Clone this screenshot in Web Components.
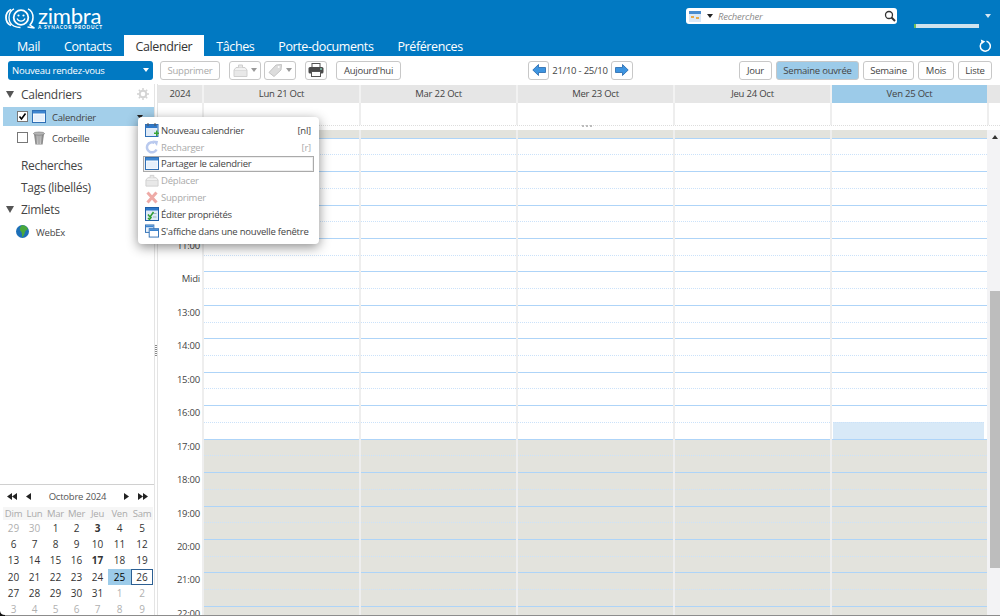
<!DOCTYPE html>
<html lang="fr">
<head>
<meta charset="utf-8">
<title>Zimbra - Calendrier</title>
<style>
    html, body {
        margin: 0;
        height: 616px;
        overflow: hidden;
        background: #fff;
        font-family: "Open Sans", "Noto Sans", sans-serif;
        font-size: 9.5px;
        letter-spacing: -.22px;
        color: #333;
    }
</style>
</head>
<body>
<zm-app></zm-app>

<script>
// petites icones partagees par tous les composants
const ICONS = {
    calendar: `<svg width="14" height="13" viewBox="0 0 14 13"><rect x=".5" y=".5" width="13" height="12" fill="#fff" stroke="#2f6fb5"/><rect x="1" y="1" width="12" height="2.5" fill="#3d85d0"/><rect x="1.5" y="4.5" width="11" height="7" fill="#e6f0fb"/></svg>`,
    trash: `<svg width="14" height="14" viewBox="0 0 14 14"><path d="M2 3h10l-1.4 10.5H3.4z" fill="#8d8d8d"/><path d="M5 4l.4 9M7 4v9M9 4l-.4 9" stroke="#cfcfcf"/><ellipse cx="7" cy="2.6" rx="5.6" ry="1.6" fill="#b5b5b5" stroke="#777" stroke-width=".6"/></svg>`,
    globe: `<svg width="13" height="13" viewBox="0 0 13 13"><circle cx="6.5" cy="6.5" r="6.5" fill="#1c6fb8"/><path d="M6 0c3 .4 5 1.500 6 4-1 1.500-2.500 1-3 3s-1 3.500-2.500 5.500C5.500 10 6.500 8 5 6.500S3 3 6 0z" fill="#49a83c"/></svg>`,
    gear: `<svg width="12" height="12" viewBox="0 0 12 12"><circle cx="6" cy="6" r="3.300" fill="none" stroke="#d4d4d4" stroke-width="2"/><path d="M6 0v2.500M6 9.500V12M0 6h2.500M9.500 6H12M1.800 1.800l1.800 1.800M8.400 8.400l1.800 1.800M10.200 1.800L8.400 3.600M3.600 8.400l-1.800 1.800" stroke="#d4d4d4" stroke-width="1.500"/></svg>`,
    newcal: `<svg width="14" height="14" viewBox="0 0 14 14"><rect x=".5" y="1.500" width="12.500" height="12" fill="#dfeaf7" stroke="#2f6fb5"/><rect x="1" y="2" width="11.500" height="3" fill="#2f78c9"/><path d="M3 0v3M10 0v3" stroke="#555"/><path d="M9 9.500h2v-2h1.500v2h1.500V11h-1.500v2H11v-2H9z" fill="#3aa535"/></svg>`,
    reload: `<svg width="14" height="14" viewBox="0 0 14 14"><path d="M11.500 9.500A5 5 0 1 1 9.500 3" fill="none" stroke="#b9c9ee" stroke-width="2.500"/><path d="M7.500 .5L13 1l-1 5z" fill="#b9c9ee"/></svg>`,
    move: `<svg width="15" height="13" viewBox="0 0 15 13"><path d="M1 6h13v6.500H1z" fill="#e8e8e8" stroke="#cfcfcf"/><path d="M1 6l2-2.500h9L14 6" fill="#f2f2f2" stroke="#cfcfcf"/><path d="M5.500 3.500V1h4v2.500" fill="#e8e8e8" stroke="#cfcfcf"/></svg>`,
    tag: `<svg width="15" height="13" viewBox="0 0 15 13"><path d="M1 9l7-7.500L13.500 1 13 6.500 6 13z" transform="translate(0 -.5)" fill="#dcdcdc" stroke="#c4c4c4"/><circle cx="10.700" cy="3" r="1" fill="#fff"/></svg>`,
    cross: `<svg width="14" height="13" viewBox="0 0 14 13"><path d="M2.500 1.500l9 10M11.500 1.500l-9 10" stroke="#eeaaa6" stroke-width="3"/></svg>`,
    props: `<svg width="14" height="14" viewBox="0 0 14 14"><rect x=".5" y=".5" width="13" height="13" fill="#dfeaf7" stroke="#1f5fa8"/><rect x="1" y="1" width="12" height="2.500" fill="#2f78c9"/><path d="M8 6.500h3.500M8 10h3.500" stroke="#9bb"/><path d="M3 7.500l2 2.500 3.500-5M3 11l1.500 1.500 2-2.500" fill="none" stroke="#2f9e33" stroke-width="1.500"/></svg>`,
    newwin: `<svg width="15" height="14" viewBox="0 0 15 14"><rect x=".5" y=".5" width="9" height="8" fill="#e9f2fb" stroke="#2f6fb5"/><rect x="1" y="1" width="8" height="2" fill="#3d85d0"/><rect x="4.500" y="4.500" width="10" height="9" fill="#fff" stroke="#2f6fb5"/><rect x="5" y="5" width="9" height="2" fill="#3d85d0"/></svg>`,
    printer: `<svg width="16" height="14" viewBox="0 0 16 14"><rect x="4" y=".5" width="8" height="4" fill="#fff" stroke="#555"/><rect x=".5" y="4" width="15" height="6.500" rx="1.500" fill="#4a4a4a"/><rect x="3.500" y="8.500" width="9" height="5" fill="#fff" stroke="#555"/><rect x="12" y="5.500" width="2" height="1" fill="#9fd"/></svg>`,
    arrowL: `<svg width="14" height="12" viewBox="0 0 14 12"><path d="M.8 6L6.500.5v3H13.500v5H6.500v3z" fill="#3d94e0" stroke="#2467ab" stroke-width=".8"/></svg>`,
    arrowR: `<svg width="14" height="12" viewBox="0 0 14 12"><path d="M13.200 6L7.500.5v3H.5v5h7v3z" fill="#3d94e0" stroke="#2467ab" stroke-width=".8"/></svg>`
};

// raccourci: chaque classe pose son template dans un shadow root ouvert
class ZmBase extends HTMLElement {
    constructor() {
        super();
        this.attachShadow({ mode: "open" });
    }
    render(html) {
        this.shadowRoot.innerHTML = html;
    }
}

class ZmButton extends ZmBase {
    connectedCallback() {
        const on = this.hasAttribute("active") ? "background:#9ccbe9;" : "";
        const off = this.hasAttribute("disabled") ? "color:#a9a9a9;" : "";
        const caret = this.hasAttribute("caret") ? `<i></i>` : "";
        this.render(`
        <style>
            :host { display: inline-flex; margin-left: var(--gap, 0); }
            .btn {
                display: flex;
                align-items: center;
                justify-content: center;
                gap: 3px;
                box-sizing: border-box;
                height: 19px;
                width: var(--w, auto);
                background: #fff;
                border: 1px solid #c8c8c8;
                border-radius: 3px;
                color: #444;
                white-space: nowrap;
            }
            i { border: 3px solid transparent; border-top: 4px solid #999; border-bottom: 0; }
        </style>
        <div class="btn" style="${on}${off}"><slot></slot>${caret}</div>`);
    }
}

class ZmTabs extends ZmBase {
    connectedCallback() {
        const names = ["Mail", "Contacts", "Calendrier", "Tâches", "Porte-documents", "Préférences"];
        const tabs = names.map((n) =>
            `<div class="tab ${n === "Calendrier" ? "on" : ""}">${n}</div>`).join("");
        this.render(`
        <style>
            :host { display: flex; padding-left: 5px; }
            .tab {
                height: 21px;
                line-height: 23px;
                padding: 0 12px;
                font-size: 12.500px;
                letter-spacing: -.4px;
                color: #fff;
            }
            .on { background: #fff; color: #333; }
        </style>${tabs}`);
    }
}

class ZmHeader extends ZmBase {
    connectedCallback() {
        this.render(`
        <style>
            :host { display: block; height: 56px; background: #0179c2; position: relative; }
            .top { display: flex; height: 35px; box-sizing: border-box; padding: 8px 0 0 5px; }
            .logo { display: flex; width: 681px; height: 24px; align-items: flex-start; color: #fff; }
            .word { margin-left: 2px; line-height: 1; letter-spacing: 0; }
            .word b { display: block; font: 400 22px/16px Lato, sans-serif; letter-spacing: -.2px; }
            .word small { display: block; font: 700 4.800px/6px Lato, sans-serif; letter-spacing: .8px; white-space: nowrap; }
            .search {
                display: flex;
                align-items: center;
                box-sizing: border-box;
                width: 211px;
                height: 16px;
                background: #fff;
                border-radius: 3px;
                padding: 0 1px 0 3px;
            }
            .caret { width: 0; border: 3.500px solid transparent; border-top: 4px solid #222; border-bottom: 0; margin: 0 5px 0 6px; }
            .search em { flex: 1; color: #8a8a8a; }
            .user { margin: 16px 0 0 17px; width: 65px; height: 4px; background: #cfe3ee; border-left: 2px solid #6fbf5a; box-sizing: border-box; }
            .ucaret { width: 0; height: 0; border: 3.500px solid transparent; border-top: 4px solid #d5e6f2; border-bottom: 0; margin: 6px 0 0 6px; }
            .bottom { display: flex; justify-content: space-between; align-items: flex-end; padding-right: 9px; }
            .refresh { margin-bottom: 4px; }
        </style>
        <div class="top">
            <div class="logo">
                <svg width="31" height="21" viewBox="0 0 31 21">
                    <path d="M6 1.500C2.800 3 1 6 1 9.500s1.800 6.500 5 8" fill="none" stroke="#fff" stroke-width="1.800"/>
                    <path d="M9 .8C5.500 2.500 4 6 4 9.500s1.500 7 5 8.700c2 .9 4 1.300 6.500 1.300" fill="none" stroke="#fff" stroke-width="1.300"/>
                    <path d="M23 .8c3.500 1.700 5 5 5 8.700 0 3-1 5.500-3 7.500l4.500 3-7-1" fill="none" stroke="#fff" stroke-width="1.500"/>
                    <circle cx="16" cy="9.500" r="7.300" fill="none" stroke="#fff" stroke-width="1.800"/>
                    <circle cx="13.500" cy="7.500" r="1.100" fill="#fff"/><circle cx="18.500" cy="7.500" r="1.100" fill="#fff"/>
                    <path d="M12 10.500c1.500 3.500 6.500 3.500 8 0" fill="none" stroke="#fff" stroke-width="1.300"/>
                </svg>
                <div class="word"><b>zimbra</b><small>A SYNACOR PRODUCT</small></div>
            </div>
            <div class="search">
                <svg width="12" height="11" viewBox="0 0 12 11"><rect width="12" height="11" fill="#dbe8f6"/><rect width="12" height="3" fill="#4a8ccf"/><rect x="2" y="5" width="3" height="2" fill="#e9a94a"/><rect x="7" y="6" width="3" height="2" fill="#e9a94a"/></svg>
                <span class="caret"></span>
                <em>Rechercher</em>
                <svg width="12" height="12" viewBox="0 0 12 12"><circle cx="5" cy="5" r="3.500" fill="none" stroke="#333" stroke-width="1.300"/><path d="M7.500 7.500L11 11" stroke="#333" stroke-width="2"/></svg>
            </div>
            <div class="user"></div>
            <div class="ucaret"></div>
        </div>
        <div class="bottom">
            <zm-tabs></zm-tabs>
            <svg class="refresh" width="12" height="13" viewBox="0 0 12 13"><path d="M3.500 3a5 5 0 1 0 4-.7" fill="none" stroke="#fff" stroke-width="1.500"/><path d="M1.800 .5l1 4.500 3.500-2.500z" fill="#fff"/></svg>
        </div>`);
    }
}

class ZmToolbar extends ZmBase {
    connectedCallback() {
        this.render(`
        <style>
            :host { display: flex; align-items: center; height: 28px; padding: 0 8px; box-sizing: border-box; width: 1000px; }
            .new {
                display: flex;
                align-items: center;
                justify-content: space-between;
                box-sizing: border-box;
                width: 145px;
                height: 19px;
                padding: 0 4px;
                background: #0179c2;
                border-radius: 3px;
                color: #fff;
            }
            .new i { border: 3.500px solid transparent; border-top: 4px solid #fff; border-bottom: 0; }
            .range { color: #444; margin: 0 2px; width: 58px; text-align: center; white-space: nowrap; }
        </style>
        <div class="new">Nouveau rendez-vous<i></i></div>
        <zm-button disabled style="--gap:7px;--w:60px">Supprimer</zm-button>
        <zm-button caret style="--gap:9px;--w:32px">${ICONS.move}</zm-button>
        <zm-button caret style="--gap:3px;--w:32px">${ICONS.tag}</zm-button>
        <zm-button style="--gap:9px;--w:22px">${ICONS.printer}</zm-button>
        <zm-button style="--gap:9px;--w:65px">Aujourd'hui</zm-button>
        <zm-button style="--gap:127px;--w:21px">${ICONS.arrowL}</zm-button>
        <span class="range">21/10 - 25/10</span>
        <zm-button style="--w:22px">${ICONS.arrowR}</zm-button>
        <zm-button style="--gap:106px;--w:33px">Jour</zm-button>
        <zm-button active style="--gap:4px;--w:83px">Semaine ouvrée</zm-button>
        <zm-button style="--gap:4px;--w:51px">Semaine</zm-button>
        <zm-button style="--gap:4px;--w:36px">Mois</zm-button>
        <zm-button style="--gap:4px;--w:34px">Liste</zm-button>`);
    }
}

class ZmTreeRow extends ZmBase {
    connectedCallback() {
        const check = this.getAttribute("check");
        const tick = `<svg width="9" height="9" viewBox="0 0 9 9"><path d="M1.500 4.500l2 2.500 4-5.500" fill="none" stroke="#000" stroke-width="1.600"/></svg>`;
        const box = check === null ? "" :
            `<span class="box">${check === "on" ? tick : ""}</span>`;
        const icon = ICONS[this.getAttribute("icon")] || "";
        const sel = this.hasAttribute("selected");
        this.render(`
        <style>
            :host { display: block; }
            .row {
                display: flex;
                align-items: center;
                height: 19px;
                padding-left: var(--pad, 14px);
                color: #444;
                background: ${sel ? "#a3cfea" : "transparent"};
            }
            .box {
                display: flex;
                box-sizing: border-box;
                width: 11px;
                height: 11px;
                border: 1px solid #777;
                background: #fff;
                margin-right: 4px;
            }
            svg { flex: none; }
            .label { margin-left: var(--lm, 6px); padding-top: 1px; }
            .arrow { margin-left: auto; margin-right: 11px; border: 3.500px solid transparent; border-top: 4px solid #222; border-bottom: 0; }
        </style>
        <div class="row">${box}${icon}<span class="label"><slot></slot></span>${sel ? `<span class="arrow"></span>` : ""}</div>`);
    }
}

class ZmSection extends ZmBase {
    connectedCallback() {
        const gear = this.hasAttribute("gear") ? ICONS.gear : "";
        this.render(`
        <style>
            :host { display: flex; align-items: center; height: var(--h, 22px); padding-left: 6px; padding-right: 5px; font-size: 12px; letter-spacing: -.3px; color: #444; }
            i { width: 0; border: 4px solid transparent; border-top: 7px solid #555; border-bottom: 0; margin-right: 7px; }
            span { flex: 1; }
        </style>
        <i></i><span><slot></slot></span>${gear}`);
    }
}

class ZmMiniCal extends ZmBase {
    connectedCallback() {
        const names = ["Dim", "Lun", "Mar", "Mer", "Jeu", "Ven", "Sam"];
        const head = names.map((n) => `<div class="wd">${n}</div>`).join("");
        // 6 semaines, les jours du mois precedent/suivant en gris
        const days = [];
        [29, 30].forEach((d) => days.push(["out", d]));
        for (let d = 1; d <= 31; d++) days.push(["", d]);
        for (let d = 1; d <= 9; d++) days.push(["out", d]);
        const cells = days.map(([cls, d]) => {
            let c = cls;
            if (!cls && (d === 3 || d === 17)) c = "bold";
            if (!cls && d === 25) c = "sel";
            if (!cls && d === 26) c = "today";
            return `<div class="d ${c}">${d}</div>`;
        }).join("");
        this.render(`
        <style>
            :host { display: block; border-top: 1px solid #d0d0d0; padding: 0 1px 0 3px; box-sizing: border-box; width: 154px; height: 132px; }
            .nav { display: flex; align-items: center; justify-content: space-between; height: 22px; padding: 0 5px 0 4px; color: #555; }
            .nav div { display: flex; gap: 9px; }
            .grid { display: grid; grid-template-columns: repeat(5, 21px) 23px 22px; }
            .wd { height: 13px; line-height: 14px; text-align: center; color: #aaa; background: #f6f6f6; }
            .d { height: 16.200px; line-height: 16px; text-align: center; font-size: 10px; letter-spacing: 0; color: #333; box-sizing: border-box; }
            .out { color: #b0b0b0; }
            .bold { font-weight: 700; }
            .sel { background: #9ccbe9; color: #000; }
            .today { border: 1px solid #2c5f92; line-height: 14px; }
            svg { display: block; }
        </style>
        <div class="nav">
            <div><svg width="10" height="7" viewBox="0 0 10 7"><path d="M5 0v7L0 3.500zM10 0v7L5 3.500z" fill="#222"/></svg><svg width="5" height="7" viewBox="0 0 5 7"><path d="M5 0v7L0 3.500z" fill="#222"/></svg></div>
            <em style="font-style:normal">Octobre 2024</em>
            <div><svg width="5" height="7" viewBox="0 0 5 7"><path d="M0 0v7l5-3.500z" fill="#222"/></svg><svg width="10" height="7" viewBox="0 0 10 7"><path d="M0 0v7l5-3.500zM5 0v7l5-3.500z" fill="#222"/></svg></div>
        </div>
        <div class="grid">${head}${cells}</div>`);
    }
}

class ZmSidebar extends ZmBase {
    connectedCallback() {
        this.render(`
        <style>
            :host { display: flex; flex-direction: column; justify-content: space-between; width: 158px; flex: none; height: 532px; box-sizing: border-box; border-right: 1px solid #e4e4e4; position: relative; }
            .tree { width: 154px; box-sizing: border-box; }
            .grip { position: absolute; left: 155px; top: 261px; width: 2px; height: 11px; background: repeating-linear-gradient(#888 0 1px, transparent 1px 2px); }
            .line { position: absolute; left: 154px; top: 0; bottom: 0; width: 1px; background: #e4e4e4; }
            .plain { font-size: 12px; letter-spacing: -.3px; color: #444; height: 22px; line-height: 22px; padding-left: 21px; }
        </style>
        <div class="tree">
            <zm-section gear style="--h:20px">Calendriers</zm-section>
            <zm-tree-row check="on" icon="calendar" selected style="margin:3px 0 0 3px;width:151px">Calendrier</zm-tree-row>
            <zm-tree-row check="off" icon="trash" style="margin:2px 0 0 3px;width:151px">Corbeille</zm-tree-row>
            <div class="plain" style="margin-top:8px">Recherches</div>
            <div class="plain">Tags (libellés)</div>
            <zm-section style="margin-top:-1px">Zimlets</zm-section>
            <zm-tree-row icon="globe" style="--pad:16px;--lm:7px;margin-top:2px">WebEx</zm-tree-row>
        </div>
        <zm-mini-cal></zm-mini-cal>
        <div class="line"></div>
        <div class="grip"></div>`);
    }
}

class ZmWeek extends ZmBase {
    connectedCallback() {
        const days = ["Lun 21 Oct", "Mar 22 Oct", "Mer 23 Oct", "Jeu 24 Oct", "Ven 25 Oct"];
        // 8h a 10h sont cachees sous le menu ouvert
        const labelOf = (h) => h < 11 ? "" : h === 12 ? "Midi" : `${h}:00`;
        const hours = [];
        for (let h = 8; h <= 22; h++) hours.push(h);

        const times = hours.map((h) => `<div class="t">${labelOf(h)}</div>`).join("");
        const cols = days.map((d, i) => {
            let cells = "";
            hours.forEach((h) => {
                const off = h >= 17 ? "off" : "";
                const free = (i === 4 && h === 16) ? "now" : "";
                cells += `<div class="s hr ${off}"></div><div class="s ${off} ${free}"></div>`;
            });
            return `<div class="col"><div class="strip"></div>${cells}</div>`;
        }).join("");

        const heads = days.map((d, i) =>
            `<div class="dh ${i === 4 ? "cur" : ""}">${d}</div>`).join("");
        const allday = days.map(() => `<div class="ad"></div>`).join("");

        this.render(`
        <style>
            :host { display: flex; flex-direction: column; flex: 1; min-width: 0; height: 532px; overflow: hidden; position: relative; }
            .row { display: grid; grid-template-columns: 44px repeat(5, 157px) 1fr; flex: none; }
            .head { height: 18px; margin-top: 1px; background: #e6e6e6; color: #444; line-height: 18px; text-align: center; }
            .dh { border-left: 2px solid #f2f2f2; box-sizing: border-box; }
            .cur { background: #9ccbe9; }
            .allday { height: 22px; }
            .ad { border-left: 2px solid #eee; }
            .sash { position: relative; height: 5px; border-top: 1px dotted #ddd; box-sizing: border-box; }
            .dots { position: absolute; left: 424px; top: -1px; width: 2px; height: 2px; background: #bbb; box-shadow: 4px 0 #bbb, 8px 0 #bbb; }
            .body { flex: 1; min-height: 0; overflow: hidden; display: grid; grid-template-columns: 44px repeat(5, 157px) 1fr; align-items: start; }
            .times { padding-top: 7.700px; }
            .t { height: 33.450px; text-align: right; padding-right: 2px; line-height: 15px; color: #444; }
            .col { border-left: 2px solid #eee; box-sizing: border-box; }
            .strip { height: 7.700px; background: #e3e3dd; }
            .s { height: 16.725px; box-sizing: border-box; border-top: 1px dotted #cbe2fa; }
            .hr { border-top: 1px solid #aed4f8; }
            .off { background: #e3e3dd; }
            .now { background: #d8e9f7; margin: 0 3px 0 1px; }
            .scroll { position: relative; height: 100%; background: #f3f3f5; }
            .up, .down { position: absolute; left: 5px; width: 0; border: 3.500px solid transparent; }
            .up { top: 5px; border-bottom: 4px solid #333; border-top: 0; }
            .down { bottom: 6px; border-top: 4px solid #333; border-bottom: 0; }
            .thumb { position: absolute; left: 3px; right: 0; top: 161px; height: 277px; background: #bdbdbd; }
        </style>
        <div class="row head"><div>2024</div>${heads}<div></div></div>
        <div class="row allday"><div></div>${allday}<div class="ad"></div></div>
        <div class="sash"><div class="dots"></div></div>
        <div class="body">
            <div class="times">${times}</div>
            ${cols}
            <div class="scroll"><i class="up"></i><div class="thumb"></div><i class="down"></i></div>
        </div>`);
    }
}

class ZmMenuItem extends ZmBase {
    connectedCallback() {
        const off = this.hasAttribute("disabled");
        const hot = this.hasAttribute("hot");
        const key = this.getAttribute("key");
        this.render(`
        <style>
            :host { display: block; }
            .it {
                display: flex;
                align-items: center;
                box-sizing: border-box;
                height: 16.800px;
                padding: 0 2px 0 1px;
                gap: 2px;
                white-space: nowrap;
                color: ${off ? "#aaa" : "#444"};
                border: 1px solid ${hot ? "#aaa" : "transparent"};
                box-shadow: ${hot ? "inset 0 0 0 1px #eee" : "none"};
            }
            .ic { width: 14px; display: flex; justify-content: center; flex: none; }
            .key { margin-left: auto; }
        </style>
        <div class="it"><span class="ic">${ICONS[this.getAttribute("icon")] || ""}</span><slot></slot>${key ? `<span class="key">${key}</span>` : ""}</div>`);
    }
}

class ZmMenu extends ZmBase {
    connectedCallback() {
        this.render(`
        <style>
            :host {
                position: absolute;
                left: 138px;
                top: 117px;
                width: 181px;
                height: 127px;
                box-sizing: border-box;
                padding: 5px 5px 0 5px;
                background: #fff;
                border-radius: 4px;
                box-shadow: 0 3px 12px rgba(0,0,0,.45);
                z-index: 5;
            }
        </style>
        <slot></slot>`);
    }
}

class ZmApp extends ZmBase {
    connectedCallback() {
        this.render(`
        <style>
            :host { display: block; position: relative; width: 1000px; height: 616px; overflow: hidden; }
            .main { display: flex; height: 532px; }
            .edge { position: absolute; left: 0; right: 0; bottom: 0; height: 1px; background: #8c8c8c; }
            .corner { position: absolute; left: 0; bottom: 0; }
        </style>
        <zm-header></zm-header>
        <zm-toolbar></zm-toolbar>
        <div class="main">
            <zm-sidebar></zm-sidebar>
            <zm-week></zm-week>
        </div>
        <zm-menu>
            <zm-menu-item icon="newcal" key="[nl]">Nouveau calendrier</zm-menu-item>
            <zm-menu-item icon="reload" key="[r]" disabled>Recharger</zm-menu-item>
            <zm-menu-item icon="calendar" hot>Partager le calendrier</zm-menu-item>
            <zm-menu-item icon="move" disabled>Déplacer</zm-menu-item>
            <zm-menu-item icon="cross" disabled>Supprimer</zm-menu-item>
            <zm-menu-item icon="props">Éditer propriétés</zm-menu-item>
            <zm-menu-item icon="newwin">S'affiche dans une nouvelle fenêtre</zm-menu-item>
        </zm-menu>
        <div class="edge"></div>
        <svg class="corner" width="5" height="5" viewBox="0 0 5 5"><path d="M0 0c.5 2.500 2 4 5 4v1H0z" fill="#111"/></svg>`);
    }
}

// les enfants d'abord, ensuite le conteneur
customElements.define("zm-button", ZmButton);
customElements.define("zm-tabs", ZmTabs);
customElements.define("zm-header", ZmHeader);
customElements.define("zm-toolbar", ZmToolbar);
customElements.define("zm-tree-row", ZmTreeRow);
customElements.define("zm-section", ZmSection);
customElements.define("zm-mini-cal", ZmMiniCal);
customElements.define("zm-sidebar", ZmSidebar);
customElements.define("zm-week", ZmWeek);
customElements.define("zm-menu-item", ZmMenuItem);
customElements.define("zm-menu", ZmMenu);
customElements.define("zm-app", ZmApp);
</script>
</body>
</html>
